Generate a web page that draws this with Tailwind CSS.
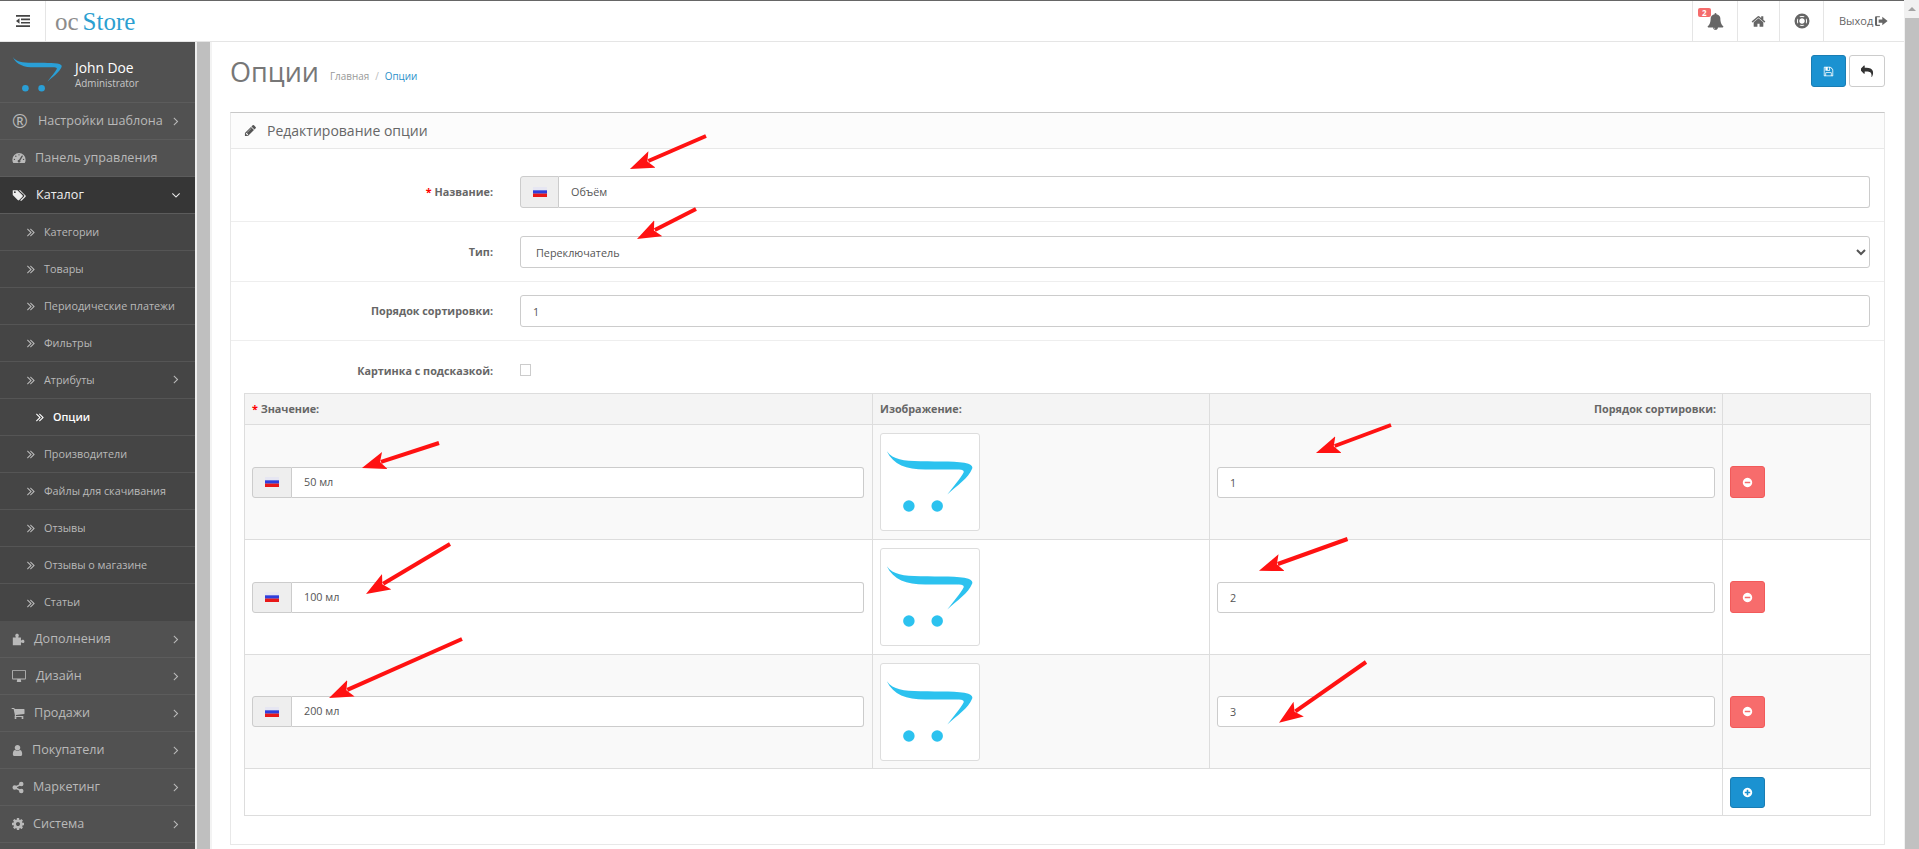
<!DOCTYPE html>
<html lang="ru">
<head>
<meta charset="UTF-8">
<title>Опции</title>
<script src="https://cdn.jsdelivr.net/npm/@tailwindcss/browser@4"></script>
</head>
<body class="relative h-[849px] overflow-hidden bg-white font-['Open_Sans',sans-serif] text-[10.8px] text-[#666]">

<!-- icon set -->
<svg class="hidden">
  <symbol id="i-right" viewBox="0 0 1792 1792"><path d="M1171 960q0 13-10 23l-466 466q-10 10-23 10t-23-10l-50-50q-10-10-10-23t10-23l393-393-393-393q-10-10-10-23t10-23l50-50q10-10 23-10t23 10l466 466q10 10 10 23z"/></symbol>
  <symbol id="i-down" viewBox="0 0 1792 1792"><path d="M1395 736q0 13-10 23l-466 466q-10 10-23 10t-23-10l-466-466q-10-10-10-23t10-23l50-50q10-10 23-10t23 10l393 393 393-393q10-10 23-10t23 10l50 50q10 10 10 23z"/></symbol>
  <symbol id="i-dbl" viewBox="0 0 1792 1792"><path d="M979 960q0 13-10 23l-466 466q-10 10-23 10t-23-10l-50-50q-10-10-10-23t10-23l393-393-393-393q-10-10-10-23t10-23l50-50q10-10 23-10t23 10l466 466q10 10 10 23zm384 0q0 13-10 23l-466 466q-10 10-23 10t-23-10l-50-50q-10-10-10-23t10-23l393-393-393-393q-10-10-10-23t10-23l50-50q10-10 23-10t23 10l466 466q10 10 10 23z"/></symbol>
  <symbol id="i-bell" viewBox="0 0 1792 1792"><path d="M912 1696q0-16-16-16-59 0-101.5-42.5t-42.5-101.5q0-16-16-16t-16 16q0 73 51.5 124.5t124.5 51.5q16 0 16-16zm816-288q0 52-38 90t-90 38h-448q0 106-75 181t-181 75-181-75-75-181h-448q-52 0-90-38t-38-90q50-42 91-88t85-119.5 74.5-158.5 50-206 19.5-260q0-152 117-282.5t307-158.5q-8-19-8-39 0-40 28-68t68-28 68 28 28 68q0 20-8 39 190 28 307 158.5t117 282.5q0 139 19.5 260t50 206 74.5 158.5 85 119.5 91 88z"/></symbol>
  <symbol id="i-home" viewBox="0 0 1792 1792"><path d="M1472 992v480q0 26-19 45t-45 19h-384v-384h-256v384h-384q-26 0-45-19t-19-45v-480q0-1 .5-3t.5-3l575-474 575 474q1 2 1 6zm223-69l-62 74q-8 9-21 11h-3q-13 0-21-7l-692-577-692 577q-12 8-24 7-13-2-21-11l-62-74q-8-10-7-23.5t11-21.5l719-599q32-26 76-26t76 26l244 204v-195q0-14 9-23t23-9h192q14 0 23 9t9 23v408l219 182q10 8 11 21.5t-7 23.5z"/></symbol>
  <symbol id="i-user" viewBox="0 0 1792 1792"><path d="M1536 1399q0 109-62.5 187t-150.5 78h-854q-88 0-150.5-78t-62.5-187q0-85 8.5-160.5t31.5-152 58.5-131 94-89 134.5-34.5q131 128 313 128t313-128q76 0 134.5 34.5t94 89 58.5 131 31.5 152 8.5 160.5zm-256-887q0 159-112.5 271.5t-271.5 112.5-271.5-112.5-112.5-271.5 112.5-271.5 271.5-112.5 271.5 112.5 112.5 271.5z"/></symbol>
  <symbol id="i-cart" viewBox="0 0 1792 1792"><path d="M704 1536q0 52-38 90t-90 38-90-38-38-90 38-90 90-38 90 38 38 90zm896 0q0 52-38 90t-90 38-90-38-38-90 38-90 90-38 90 38 38 90zm128-1088v512q0 24-16.5 42.5t-40.5 21.5l-1044 122q13 60 13 70 0 16-24 64h920q26 0 45 19t19 45-19 45-45 19h-1024q-26 0-45-19t-19-45q0-11 8-31.5t16-36 21.5-40 15.5-29.5l-177-823h-204q-26 0-45-19t-19-45 19-45 45-19h256q16 0 28.5 6.5t19.5 15.5 13 24.5 8 26 5.5 29.5 4.5 26h1201q26 0 45 19t19 45z"/></symbol>
  <symbol id="i-minus" viewBox="0 0 1792 1792"><path d="M1344 960v-128q0-26-19-45t-45-19h-768q-26 0-45 19t-19 45v128q0 26 19 45t45 19h768q26 0 45-19t19-45zm320-64q0 209-103 385.5t-279.5 279.5-385.5 103-385.5-103-279.5-279.5-103-385.5 103-385.5 279.5-279.5 385.5-103 385.5 103 279.5 279.5 103 385.5z"/></symbol>
  <symbol id="i-plus" viewBox="0 0 1792 1792"><path d="M1344 960v-128q0-26-19-45t-45-19h-256v-256q0-26-19-45t-45-19h-128q-26 0-45 19t-19 45v256h-256q-26 0-45 19t-19 45v128q0 26 19 45t45 19h256v256q0 26 19 45t45 19h128q26 0 45-19t19-45v-256h256q26 0 45-19t19-45zm320-64q0 209-103 385.5t-279.5 279.5-385.5 103-385.5-103-279.5-279.5-103-385.5 103-385.5 279.5-279.5 385.5-103 385.5 103 279.5 279.5 103 385.5z"/></symbol>
  <symbol id="i-reply" viewBox="0 0 1792 1792"><path d="M1664 1120q0 166-127 451-3 7-10.5 24t-13.5 30-13 22q-12 17-28 17-15 0-23.5-10t-8.5-25q0-9 2.5-26.5t2.5-23.5q5-68 5-123 0-101-17.5-181t-48.5-138.5-80-101-105.5-69.5-133-42.5-154-21.5-175.5-6h-224v256q0 26-19 45t-45 19-45-19l-512-512q-19-19-19-45t19-45l512-512q19-19 45-19t45 19 19 45v256h224q713 0 875 403 53 134 53 333z"/></symbol>
  <symbol id="i-cog" viewBox="0 0 1792 1792"><path d="M1152 896q0-106-75-181t-181-75-181 75-75 181 75 181 181 75 181-75 75-181zm512-109v222q0 12-8 23t-20 13l-185 28q-19 54-39 91 35 50 107 138 10 12 10 25t-9 23q-27 37-99 108t-94 71q-12 0-26-9l-138-108q-44 23-91 38-16 136-29 186-7 28-36 28h-222q-14 0-24.5-8.5t-11.5-21.5l-28-184q-49-16-90-37l-141 107q-10 9-25 9-14 0-25-11-126-114-165-168-7-10-7-23 0-12 8-23 15-21 51-66.5t54-70.5q-27-50-41-99l-183-27q-13-2-21-12.5t-8-23.5v-222q0-12 8-23t19-13l186-28q14-46 39-92-40-57-107-138-10-12-10-24 0-10 9-23 26-36 98.5-107.5t94.5-71.5q13 0 26 10l138 107q44-23 91-38 16-136 29-186 7-28 36-28h222q14 0 24.5 8.5t11.5 21.5l28 184q49 16 90 37l142-107q9-9 24-9 13 0 25 10 129 119 165 170 7 8 7 22 0 12-8 23-15 21-51 66.5t-54 70.5q26 50 41 98l183 28q13 2 21 12.5t8 23.5z"/></symbol>
  <symbol id="i-pencil" viewBox="0 0 1792 1792"><path d="M491 1536l91-91-235-235-91 91v107h128v128h107zm523-928q0-22-22-22-10 0-17 7l-542 542q-7 7-7 17 0 22 22 22 10 0 17-7l542-542q7-7 7-17zm-54-192l416 416-832 832h-416v-416zm683 96q0 53-37 90l-166 166-416-416 166-165q36-38 90-38 53 0 91 38l235 234q37 39 37 91z"/></symbol>
  <symbol id="i-save" viewBox="0 0 1792 1792"><path d="M512 1536h768v-384h-768v384zm896 0h128v-896q0-14-10-38.5t-20-34.5l-281-281q-10-10-34-20t-39-10v416q0 40-28 68t-68 28h-576q-40 0-68-28t-28-68v-416h-128v1280h128v-416q0-40 28-68t68-28h832q40 0 68 28t28 68v416zm-384-928v-320q0-13-9.5-22.5t-22.5-9.5h-192q-13 0-22.5 9.5t-9.5 22.5v320q0 13 9.5 22.5t22.5 9.5h192q13 0 22.5-9.5t9.5-22.5zm640 32v928q0 40-28 68t-68 28h-1344q-40 0-68-28t-28-68v-1344q0-40 28-68t68-28h928q40 0 88 20t76 48l280 280q28 28 48 76t20 88z"/></symbol>
  <symbol id="i-gauge" viewBox="0 0 20 16"><path fill-rule="evenodd" d="M10 1a9.5 9.5 0 0 0-9.5 9.5c0 1.800.5 3.400 1.300 4.700h16.400c.8-1.300 1.300-2.900 1.300-4.700A9.500 9.500 0 0 0 10 1zM9 3.500a1 1 0 1 1 2 0 1 1 0 0 1-2 0zM4.500 5.500a1 1 0 1 1 2 0 1 1 0 0 1-2 0zM2.500 10a1 1 0 1 1 2 0 1 1 0 0 1-2 0zM15.500 10a1 1 0 1 1 2 0 1 1 0 0 1-2 0zM13.500 5a1 1 0 1 1 1.600 1.100l-3.300 5.300a2 2 0 1 1-1.700-1z"/></symbol>
  <symbol id="i-tags" viewBox="0 0 20 16"><path fill-rule="evenodd" d="M1 1.500h6.200L14 8.300a1.400 1.400 0 0 1 0 2L9.600 14.700a1.400 1.400 0 0 1-2 0L1 8zM3.800 3a1.200 1.200 0 1 0 0 2.400 1.200 1.200 0 0 0 0-2.400z"/><path d="M9 1.500h2l7 7a1.200 1.200 0 0 1 0 1.800l-5 5a1.300 1.300 0 0 1-1.800 0l-.2-.2 4.800-4.900a1.700 1.700 0 0 0 0-2.400z"/></symbol>
  <symbol id="i-puzzle" viewBox="0 0 16 16"><path d="M1 5.500h3.300c.5 0 .6-.3.3-.8-.5-.7-.6-1.200-.6-1.700C4 1.800 5 1 6.200 1S8.400 1.800 8.400 3c0 .5-.2 1-.6 1.700-.3.500-.2.800.3.800H11v3.300c0 .5.400.6.800.2.500-.4 1-.6 1.500-.6C14.500 8.400 15.300 9.200 15.300 10.400s-.8 2-2 2c-.5 0-1-.2-1.500-.6-.4-.4-.8-.3-.8.200V15H1z"/></symbol>
  <symbol id="i-desk" viewBox="0 0 16 14"><path fill-rule="evenodd" d="M1.200 0h13.600C15.500 0 16 .5 16 1.200v8.600c0 .7-.5 1.200-1.200 1.200H10c0 1 .6 1.500.6 2 0 .5-.2 1-.6 1H6c-.4 0-.6-.5-.6-1s.6-1 .6-2H1.200C.5 11 0 10.500 0 9.800V1.200C0 .5.500 0 1.200 0zM1 1v9h14V1z"/></symbol>
  <symbol id="i-share" viewBox="0 0 14 16"><path d="M11 1a2.800 2.800 0 1 0-.0 5.600A2.800 2.800 0 0 0 11 1zM3 5.200a2.800 2.800 0 1 0 0 5.600 2.800 2.800 0 0 0 0-5.600zM11 9.400a2.800 2.800 0 1 0 0 5.600 2.800 2.800 0 0 0 0-5.600z"/><path d="M3 8l8-4.200M3 8l8 4.200" stroke="currentColor" stroke-width="1.800" fill="none"/></symbol>
  <symbol id="i-ring" viewBox="0 0 16 16"><circle cx="8" cy="8" r="6.300" fill="none" stroke="currentColor" stroke-width="2.400"/><circle cx="8" cy="8" r="3.400" fill="none" stroke="currentColor" stroke-width="1.400"/><path d="M3.500 3.500l2.400 2.400M12.500 3.500l-2.400 2.400M3.500 12.500l2.400-2.400M12.500 12.500l-2.400-2.400" stroke="currentColor" stroke-width="2.600"/><path d="M3.800 8h3M9.200 8h3M8 3.800v3M8 9.200v3" stroke="#fff" stroke-width="0"/></symbol>
  <symbol id="i-exit" viewBox="0 0 16 14"><path d="M1.500 1H6v1.500H2.500v9H6V13H1.500C.7 13 0 12.300 0 11.500v-9C0 1.700.7 1 1.500 1z"/><path d="M4.500 5H9V1.800L15.500 7 9 12.200V9H4.500z"/></symbol>
  <symbol id="i-indent" viewBox="0 0 16 14"><path d="M1 1h14v1.700H1zM1 11.300h14V13H1zM6 4.500h9v1.700H6zM6 7.900h9v1.700H6zM4.500 4.200v5.600L1 7z"/></symbol>
  <symbol id="i-logo" viewBox="0 0 100 100"><path d="M5 18C12 27 22 28 40 28.500 60 29 80 28 90 31q5 2 4 5C90 46 78 54 68 63 74 55 82 46 85 40c1-3-3-3-13-3L45 37C25 37 12 32 5 18z"/><circle cx="28" cy="75" r="6"/><circle cx="57.500" cy="75" r="6"/></symbol>
  <symbol id="i-flag" viewBox="0 0 14 10"><rect width="14" height="3.400" fill="#e6e6f2"/><rect y="3.300" width="14" height="3.400" fill="#2f3fdc"/><rect y="6.600" width="14" height="3.400" fill="#e81818"/></symbol>
</svg>

<div class="flex h-full">
  <div class="flex w-[1904px] shrink-0 flex-col">

    <!-- top bar -->
    <header class="flex h-[42px] shrink-0 items-stretch border-t border-b border-t-[#666] border-b-[#e5e5e5] bg-white">
      <div class="flex w-[46px] items-center justify-center border-r border-[#e5e5e5] text-[#444]">
        <svg class="h-[14px] w-[16px] fill-current"><use href="#i-indent"/></svg>
      </div>
      <a class="ml-[9px] flex items-center font-['Liberation_Serif',serif] text-[25px] leading-none">
        <span class="text-[#8c8c8c]">oc</span><span class="ml-[4px] text-[#2c9fd1]">Store</span>
      </a>
      <div class="ml-auto flex items-stretch text-[#666]">
        <div class="relative flex w-[45px] items-center justify-center border-l border-[#e5e5e5]">
          <span class="absolute top-[7px] left-[5px] rounded-[2px] bg-[#f56c6c] px-[4px] text-[8px] leading-[9px] font-bold text-white">2</span>
          <svg class="mt-[1px] h-[17px] w-[17px] fill-current"><use href="#i-bell"/></svg>
        </div>
        <div class="flex w-[42px] items-center justify-center border-l border-[#e5e5e5]">
          <svg class="h-[15px] w-[15px] fill-current"><use href="#i-home"/></svg>
        </div>
        <div class="flex w-[44px] items-center justify-center border-l border-[#e5e5e5]">
          <svg class="h-[16px] w-[16px] fill-current"><use href="#i-ring"/></svg>
        </div>
        <div class="flex w-[81px] items-center gap-[2px] border-l border-[#e5e5e5] pl-[15px] text-[11px]">
          Выход <svg class="h-[12px] w-[13px] fill-current"><use href="#i-exit"/></svg>
        </div>
      </div>
    </header>

    <div class="flex min-h-0 flex-1">
      <!-- sidebar -->
      <aside class="w-[195px] shrink-0 bg-[#515151] text-[12.6px] text-[#b9b9b9]">
        <div class="flex h-[61px] items-start border-b border-[#5c5c5c]">
          <svg class="mt-[5px] ml-[10px] h-[55px] w-[55px] shrink-0 fill-[#2a9fd6]"><use href="#i-logo"/></svg>
          <div class="mt-[19px] ml-[10px] leading-none">
            <div class="text-[13.8px] text-white">John Doe</div>
            <div class="mt-[4px] text-[9.9px] text-[#c8c8c8]">Administrator</div>
          </div>
        </div>
        <a class="flex h-[37px] items-center border-b border-[#5c5c5c]"><span class="w-[38px] pl-[12px] text-[19px] leading-none">®</span>Настройки шаблона<svg class="mr-[12px] ml-auto h-[14px] w-[14px] fill-current"><use href="#i-right"/></svg></a>
        <a class="flex h-[37px] items-center border-b border-[#5c5c5c]"><span class="w-[35px] pl-[12px]"><svg class="h-[12px] w-[14px] fill-current"><use href="#i-gauge"/></svg></span>Панель управления</a>
        <a class="flex h-[37px] items-center border-b border-[#5c5c5c] bg-[#363636] text-[#eee]"><span class="w-[36px] pl-[12px]"><svg class="h-[12px] w-[15px] fill-current"><use href="#i-tags"/></svg></span>Каталог<svg class="mr-[12px] ml-auto h-[14px] w-[14px] fill-current"><use href="#i-down"/></svg></a>

        <!-- catalog submenu -->
        <div class="bg-[#454545] text-[10.8px]">
          <a class="flex h-[37px] items-center border-b border-[#555] pl-[24px]"><svg class="mr-[6px] h-[14px] w-[14px] fill-current"><use href="#i-dbl"/></svg>Категории</a>
          <a class="flex h-[37px] items-center border-b border-[#555] pl-[24px]"><svg class="mr-[6px] h-[14px] w-[14px] fill-current"><use href="#i-dbl"/></svg>Товары</a>
          <a class="flex h-[37px] items-center border-b border-[#555] pl-[24px]"><svg class="mr-[6px] h-[14px] w-[14px] fill-current"><use href="#i-dbl"/></svg>Периодические платежи</a>
          <a class="flex h-[37px] items-center border-b border-[#555] pl-[24px]"><svg class="mr-[6px] h-[14px] w-[14px] fill-current"><use href="#i-dbl"/></svg>Фильтры</a>
          <a class="flex h-[37px] items-center border-b border-[#555] pl-[24px]"><svg class="mr-[6px] h-[14px] w-[14px] fill-current"><use href="#i-dbl"/></svg>Атрибуты<svg class="mr-[12px] mb-[2px] ml-auto h-[14px] w-[14px] fill-current"><use href="#i-right"/></svg></a>
          <a class="flex h-[37px] items-center border-b border-[#555] pl-[33px] font-semibold text-white"><svg class="mr-[6px] h-[14px] w-[14px] fill-current"><use href="#i-dbl"/></svg>Опции</a>
          <a class="flex h-[37px] items-center border-b border-[#555] pl-[24px]"><svg class="mr-[6px] h-[14px] w-[14px] fill-current"><use href="#i-dbl"/></svg>Производители</a>
          <a class="flex h-[37px] items-center border-b border-[#555] pl-[24px]"><svg class="mr-[6px] h-[14px] w-[14px] fill-current"><use href="#i-dbl"/></svg>Файлы для скачивания</a>
          <a class="flex h-[37px] items-center border-b border-[#555] pl-[24px]"><svg class="mr-[6px] h-[14px] w-[14px] fill-current"><use href="#i-dbl"/></svg>Отзывы</a>
          <a class="flex h-[37px] items-center border-b border-[#555] pl-[24px]"><svg class="mr-[6px] h-[14px] w-[14px] fill-current"><use href="#i-dbl"/></svg>Отзывы о магазине</a>
          <a class="flex h-[37px] items-center pl-[24px]"><svg class="mr-[6px] h-[14px] w-[14px] fill-current"><use href="#i-dbl"/></svg>Статьи</a>
        </div>

        <a class="flex h-[37px] items-center border-b border-[#5c5c5c]"><span class="w-[34px] pl-[12px]"><svg class="h-[13px] w-[13px] fill-current"><use href="#i-puzzle"/></svg></span>Дополнения<svg class="mr-[12px] ml-auto h-[14px] w-[14px] fill-current"><use href="#i-right"/></svg></a>
        <a class="flex h-[37px] items-center border-b border-[#5c5c5c]"><span class="w-[36px] pl-[12px]"><svg class="h-[12px] w-[14px] fill-current"><use href="#i-desk"/></svg></span>Дизайн<svg class="mr-[12px] ml-auto h-[14px] w-[14px] fill-current"><use href="#i-right"/></svg></a>
        <a class="flex h-[37px] items-center border-b border-[#5c5c5c]"><span class="w-[34px] pl-[11px]"><svg class="h-[14px] w-[14px] fill-current"><use href="#i-cart"/></svg></span>Продажи<svg class="mr-[12px] ml-auto h-[14px] w-[14px] fill-current"><use href="#i-right"/></svg></a>
        <a class="flex h-[37px] items-center border-b border-[#5c5c5c]"><span class="w-[32px] pl-[11px]"><svg class="h-[13px] w-[13px] fill-current"><use href="#i-user"/></svg></span>Покупатели<svg class="mr-[12px] ml-auto h-[14px] w-[14px] fill-current"><use href="#i-right"/></svg></a>
        <a class="flex h-[37px] items-center border-b border-[#5c5c5c]"><span class="w-[33px] pl-[12px]"><svg class="h-[13px] w-[12px] fill-current"><use href="#i-share"/></svg></span>Маркетинг<svg class="mr-[12px] ml-auto h-[14px] w-[14px] fill-current"><use href="#i-right"/></svg></a>
        <a class="flex h-[37px] items-center border-b border-[#5c5c5c]"><span class="w-[33px] pl-[11px]"><svg class="h-[14px] w-[14px] fill-current"><use href="#i-cog"/></svg></span>Система<svg class="mr-[12px] ml-auto h-[14px] w-[14px] fill-current"><use href="#i-right"/></svg></a>
      </aside>

      <div class="w-[2px] shrink-0 bg-[#eee]"></div>
      <div class="w-[13px] shrink-0 bg-[#bfbfbf]"></div>

      <!-- content -->
      <main class="min-w-0 flex-1 border-l-2 border-[#f3f3f3] pr-[19px] pl-[18px]">
        <div class="mb-[12px] flex h-[58px] items-center">
          <h1 class="text-[27px] leading-none font-normal text-[#777]">Опции</h1>
          <div class="mt-[10px] ml-[11px] text-[9.9px] text-[#999]">Главная<span class="mx-[6px] text-[#bbb]">/</span><span class="text-[#2a8fc9]">Опции</span></div>
          <div class="ml-auto flex gap-[3px]">
            <button class="flex h-[32px] w-[35px] items-center justify-center rounded-[3px] border border-[#1a7db3] bg-[#1b92d1] text-white"><svg class="h-[11px] w-[11px] fill-current"><use href="#i-save"/></svg></button>
            <button class="flex h-[32px] w-[36px] items-center justify-center rounded-[3px] border border-[#ccc] bg-white text-[#333]"><svg class="h-[13px] w-[13px] fill-current"><use href="#i-reply"/></svg></button>
          </div>
        </div>

        <section class="h-[733px] border border-t-[#c8c8c8] border-r-[#e8e8e8] border-b-[#e8e8e8] border-l-[#e8e8e8]">
          <div class="flex h-[36px] items-center border-b border-[#e8e8e8] bg-[#fcfcfc] pl-[13px] text-[14px] text-[#666]">
            <svg class="mr-[10px] h-[13px] w-[13px] fill-[#555]"><use href="#i-pencil"/></svg>Редактирование опции
          </div>

          <div class="flex h-[73px] items-start border-b border-[#eee] pt-[27px] pr-[14px]">
            <label class="w-[262px] shrink-0 pt-[8px] text-right font-bold"><span class="text-[#f00]">*</span> Название:</label>
            <div class="ml-[27px] flex h-[32px] flex-1">
              <span class="flex w-[39px] items-center justify-center rounded-l-[3px] border border-[#ccc] bg-[#eee]"><svg class="h-[10px] w-[14px]"><use href="#i-flag"/></svg></span>
              <input class="min-w-0 flex-1 rounded-r-[3px] border border-l-0 border-[#ccc] bg-white px-[12px] text-[10.8px] text-[#555]" value="Объём">
            </div>
          </div>
          <div class="flex h-[60px] items-start border-b border-[#eee] pt-[14px] pr-[14px]">
            <label class="w-[262px] shrink-0 pt-[8px] text-right font-bold">Тип:</label>
            <select class="ml-[27px] h-[32px] flex-1 rounded-[3px] border border-[#ccc] bg-white pl-[11px] text-[10.8px] text-[#555]"><option>Переключатель</option></select>
          </div>
          <div class="flex h-[59px] items-start border-b border-[#eee] pt-[13px] pr-[14px]">
            <label class="w-[262px] shrink-0 pt-[8px] text-right font-bold">Порядок сортировки:</label>
            <input class="ml-[27px] h-[32px] flex-1 rounded-[3px] border border-[#ccc] bg-white px-[12px] text-[10.8px] text-[#555]" value="1">
          </div>
          <div class="flex h-[52px] items-start pt-[22px]">
            <label class="w-[262px] shrink-0 text-right font-bold">Картинка с подсказкой:</label>
            <input type="checkbox" class="mt-[1px] ml-[27px] h-[12px] w-[11px] appearance-none border border-[#ccc] bg-white">
          </div>

          <div class="px-[13px]">
            <table class="w-full table-fixed border-collapse">
              <colgroup><col class="w-[628px]"><col class="w-[337px]"><col class="w-[513px]"><col></colgroup>
              <thead>
                <tr class="h-[31px] bg-[#f4f4f4] text-[10.8px] font-bold">
                  <td class="border border-[#ddd] pl-[7px]"><span class="text-[#f00]">*</span> Значение:</td>
                  <td class="border border-[#ddd] pl-[7px]">Изображение:</td>
                  <td class="border border-[#ddd] pr-[6px] text-right">Порядок сортировки:</td>
                  <td class="border border-[#ddd]"></td>
                </tr>
              </thead>
              <tbody>
                <tr class="h-[115px] bg-[#f9f9f9]">
                  <td class="border border-[#ddd] pr-[8px] pl-[7px]">
                    <div class="flex h-[31px]">
                      <span class="flex w-[40px] items-center justify-center rounded-l-[3px] border border-[#ccc] bg-[#eee]"><svg class="h-[10px] w-[14px]"><use href="#i-flag"/></svg></span>
                      <input class="min-w-0 flex-1 rounded-r-[3px] border border-l-0 border-[#ccc] bg-white px-[12px] text-[10.8px] text-[#555]" value="50 мл">
                    </div>
                  </td>
                  <td class="border border-[#ddd] pl-[7px]"><div class="mb-[1px] h-[98px] w-[100px] rounded-[3px] border border-[#ddd] bg-white"><svg class="h-[96px] w-[98px] fill-[#2cc2ef]"><use href="#i-logo"/></svg></div></td>
                  <td class="border border-[#ddd] px-[7px]"><input class="h-[31px] w-full rounded-[3px] border border-[#ccc] bg-white px-[12px] text-[10.8px] text-[#555]" value="1"></td>
                  <td class="border border-[#ddd] pl-[7px]"><button class="flex h-[32px] w-[35px] items-center justify-center rounded-[3px] border border-[#f25a5a] bg-[#f76c6c] text-white"><svg class="h-[11px] w-[11px] fill-current"><use href="#i-minus"/></svg></button></td>
                </tr>
                <tr class="h-[115px] bg-white">
                  <td class="border border-[#ddd] pr-[8px] pl-[7px]">
                    <div class="flex h-[31px]">
                      <span class="flex w-[40px] items-center justify-center rounded-l-[3px] border border-[#ccc] bg-[#eee]"><svg class="h-[10px] w-[14px]"><use href="#i-flag"/></svg></span>
                      <input class="min-w-0 flex-1 rounded-r-[3px] border border-l-0 border-[#ccc] bg-white px-[12px] text-[10.8px] text-[#555]" value="100 мл">
                    </div>
                  </td>
                  <td class="border border-[#ddd] pl-[7px]"><div class="h-[98px] w-[100px] rounded-[3px] border border-[#ddd] bg-white"><svg class="h-[96px] w-[98px] fill-[#2cc2ef]"><use href="#i-logo"/></svg></div></td>
                  <td class="border border-[#ddd] px-[7px]"><input class="h-[31px] w-full rounded-[3px] border border-[#ccc] bg-white px-[12px] text-[10.8px] text-[#555]" value="2"></td>
                  <td class="border border-[#ddd] pl-[7px]"><button class="flex h-[32px] w-[35px] items-center justify-center rounded-[3px] border border-[#f25a5a] bg-[#f76c6c] text-white"><svg class="h-[11px] w-[11px] fill-current"><use href="#i-minus"/></svg></button></td>
                </tr>
                <tr class="h-[114px] bg-[#f9f9f9]">
                  <td class="border border-[#ddd] pr-[8px] pl-[7px]">
                    <div class="flex h-[31px]">
                      <span class="flex w-[40px] items-center justify-center rounded-l-[3px] border border-[#ccc] bg-[#eee]"><svg class="h-[10px] w-[14px]"><use href="#i-flag"/></svg></span>
                      <input class="min-w-0 flex-1 rounded-r-[3px] border border-l-0 border-[#ccc] bg-white px-[12px] text-[10.8px] text-[#555]" value="200 мл">
                    </div>
                  </td>
                  <td class="border border-[#ddd] pl-[7px]"><div class="h-[98px] w-[100px] rounded-[3px] border border-[#ddd] bg-white"><svg class="h-[96px] w-[98px] fill-[#2cc2ef]"><use href="#i-logo"/></svg></div></td>
                  <td class="border border-[#ddd] px-[7px]"><input class="h-[31px] w-full rounded-[3px] border border-[#ccc] bg-white px-[12px] text-[10.8px] text-[#555]" value="3"></td>
                  <td class="border border-[#ddd] pl-[7px]"><button class="flex h-[32px] w-[35px] items-center justify-center rounded-[3px] border border-[#f25a5a] bg-[#f76c6c] text-white"><svg class="h-[11px] w-[11px] fill-current"><use href="#i-minus"/></svg></button></td>
                </tr>
                <tr class="h-[47px]">
                  <td colspan="3" class="border border-[#ddd]"></td>
                  <td class="border border-[#ddd] pl-[7px]"><button class="flex h-[31px] w-[35px] items-center justify-center rounded-[3px] border border-[#1a7db3] bg-[#1b92d1] text-white"><svg class="h-[11px] w-[11px] fill-current"><use href="#i-plus"/></svg></button></td>
                </tr>
              </tbody>
            </table>
          </div>
        </section>
      </main>
    </div>
  </div>

  <!-- page scrollbar -->
  <div class="flex w-[15px] shrink-0 flex-col bg-[#f1f1f1]">
    <div class="flex h-[18px] items-center justify-center"><div class="h-0 w-0 border-x-[4px] border-b-[4px] border-x-transparent border-b-[#a3a3a3]"></div></div>
    <div class="ml-[1px] flex-1 bg-[#c1c1c1]"></div>
  </div>
</div>

<!-- red annotation arrows drawn over the screenshot -->
<svg class="pointer-events-none absolute top-0 left-0 h-[849px] w-[1919px]" viewBox="0 0 1919 849" fill="none" stroke="#ff1212" stroke-width="4">
  <defs>
    <marker id="head" markerUnits="userSpaceOnUse" markerWidth="26" markerHeight="20" refX="4" refY="9" orient="auto"><path d="M24 9 0 0 5 9 0 18z" fill="#ff1212" stroke="none"/></marker>
  </defs>
  <path d="M706 136 648.300 161" marker-end="url(#head)"/>
  <path d="M696 209 654.800 230" marker-end="url(#head)"/>
  <path d="M439 443 381 461.800" marker-end="url(#head)"/>
  <path d="M450 544 383.200 583.800" marker-end="url(#head)"/>
  <path d="M462 639 347.300 689.900" marker-end="url(#head)"/>
  <path d="M1391 425 1334.700 446" marker-end="url(#head)"/>
  <path d="M1347.500 539 1277.800 564" marker-end="url(#head)"/>
  <path d="M1366 662 1295.400 711.300" marker-end="url(#head)"/>
</svg>
</body>
</html>
